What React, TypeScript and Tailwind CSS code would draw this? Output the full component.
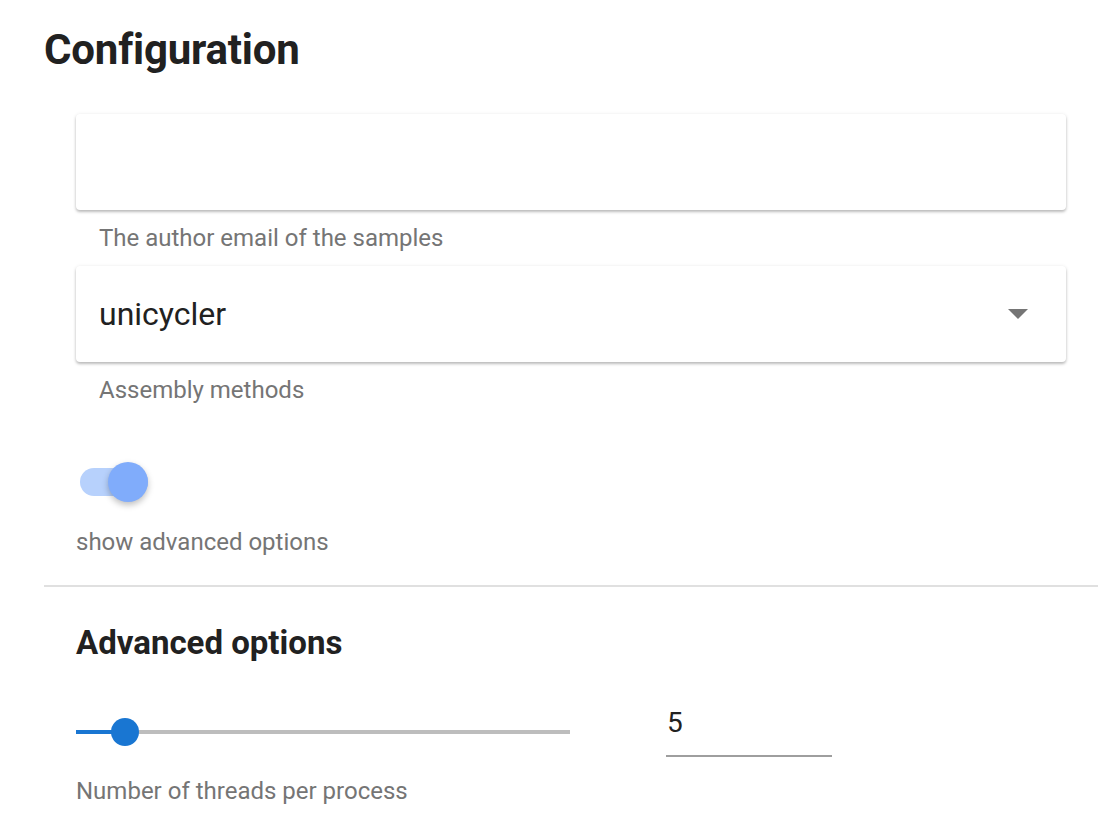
export default function App() {
  return (
    <div className="min-h-screen bg-white pl-[44px] pt-[22px] font-['Roboto',sans-serif] text-[#212121]">
      <h1 className="text-[42px] font-bold leading-[56px] tracking-[-0.2px]">Configuration</h1>

      <div className="pl-[32px] pr-[34px] pt-[36px]">
        {/* email */}
        <div className="h-[96px] rounded-[4px] bg-white shadow-[0_2px_3px_rgba(0,0,0,0.25),0_0_4px_rgba(0,0,0,0.06)]" />
        <p className="mt-[14px] pl-[23px] text-[24px] leading-[28px] text-[#757575]">
          The author email of the samples
        </p>

        {/* assembly method */}
        <div className="mt-[14px] flex h-[96px] items-center justify-between rounded-[4px] bg-white pl-[23px] pr-[38px] shadow-[0_2px_3px_rgba(0,0,0,0.25),0_0_4px_rgba(0,0,0,0.06)]">
          <span className="text-[32px] leading-none">unicycler</span>
          <svg width="20" height="10" viewBox="0 0 20 10">
            <path d="M0 0 L20 0 L10 10 Z" fill="#757575" />
          </svg>
        </div>
        <p className="mt-[14px] pl-[23px] text-[24px] leading-[28px] text-[#757575]">Assembly methods</p>

        {/* switch */}
        <div className="relative ml-[4px] mt-[58px] h-[40px] w-[68px]">
          <div className="absolute left-0 top-[6px] h-[28px] w-[68px] rounded-full bg-[#b7d1fc]" />
          <div className="absolute right-0 top-0 h-[40px] w-[40px] rounded-full bg-[#80acfb] shadow-[0_3px_6px_rgba(0,0,0,0.25)]" />
        </div>
        <p className="mt-[26px] text-[24px] leading-[28px] text-[#757575]">show advanced options</p>
      </div>

      <div className="mt-[29px] mr-[2px] h-[2px] bg-[#e0e0e0]" />

      <div className="pl-[32px]">
        <h2 className="mt-[36px] text-[33px] font-bold leading-[40px]">Advanced options</h2>

        <div className="mt-[40px] flex items-start">
          <div className="relative mt-[15px] h-[28px] w-[494px]">
            <div className="absolute left-0 top-[12px] h-[4px] w-[494px] bg-[#bdbdbd]" />
            <div className="absolute left-0 top-[12px] h-[4px] w-[50px] bg-[#1976d2]" />
            <div className="absolute left-[35px] top-0 h-[28px] w-[28px] rounded-full bg-[#1976d2]" />
          </div>
          <div className="ml-[96px] w-[166px] border-b-2 border-[#9e9e9e] pb-[16px] pl-[1px] pt-[4px] text-[28px] leading-[32px] text-[#212121]">
            5
          </div>
        </div>

        <p className="mt-[20px] text-[24px] leading-[28px] text-[#757575]">Number of threads per process</p>
      </div>
    </div>
  );
}
